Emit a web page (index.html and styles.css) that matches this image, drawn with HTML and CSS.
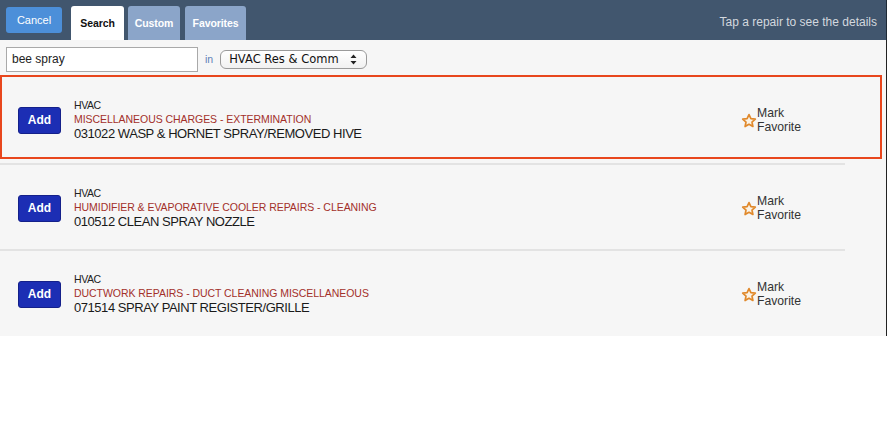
FILE: index.html
```html
<!DOCTYPE html>
<html>
<head>
<meta charset="utf-8">
<link rel="stylesheet" href="styles.css">
</head>
<body>
<div class="app">
  <div class="topbar">
    <div class="tabs">
      <div class="cancel">Cancel</div>
      <div class="tab active">Search</div>
      <div class="tab">Custom</div>
      <div class="tab">Favorites</div>
    </div>
    <div class="hint">Tap a repair to see the details</div>
  </div>
  <div class="content">
    <div class="searchrow">
      <div class="input">bee spray</div>
      <span class="in">in</span>
      <div class="select">
        <span>HVAC Res &amp; Comm</span>
        <svg class="arrows" width="7" height="11" viewBox="0 0 7 11"><path d="M3.5 0.5 L6.5 4 L0.5 4 Z M3.5 10.5 L6.5 7 L0.5 7 Z" fill="#222"/></svg>
      </div>
    </div>
    <div class="list">
      <div class="row selected">
        <div class="add">Add</div>
        <div class="info">
          <div class="trade">HVAC</div>
          <div class="cat">MISCELLANEOUS CHARGES - EXTERMINATION</div>
          <div class="name">031022 WASP &amp; HORNET SPRAY/REMOVED HIVE</div>
        </div>
        <div class="fav">
          <svg class="star" width="16" height="16" viewBox="0 0 16 16"><path d="M8 1.6 L9.9 5.6 L14.3 6.1 L11 9.1 L11.9 13.5 L8 11.3 L4.1 13.5 L5 9.1 L1.7 6.1 L6.1 5.6 Z" fill="#fbf3e6" stroke="#e0892c" stroke-width="1.7" stroke-linejoin="round"/></svg>
          <div class="favtext">Mark<br>Favorite</div>
        </div>
      </div>
      <div class="row">
        <div class="add">Add</div>
        <div class="info">
          <div class="trade">HVAC</div>
          <div class="cat">HUMIDIFIER &amp; EVAPORATIVE COOLER REPAIRS - CLEANING</div>
          <div class="name">010512 CLEAN SPRAY NOZZLE</div>
        </div>
        <div class="fav">
          <svg class="star" width="16" height="16" viewBox="0 0 16 16"><path d="M8 1.6 L9.9 5.6 L14.3 6.1 L11 9.1 L11.9 13.5 L8 11.3 L4.1 13.5 L5 9.1 L1.7 6.1 L6.1 5.6 Z" fill="#fbf3e6" stroke="#e0892c" stroke-width="1.7" stroke-linejoin="round"/></svg>
          <div class="favtext">Mark<br>Favorite</div>
        </div>
      </div>
      <div class="row">
        <div class="add">Add</div>
        <div class="info">
          <div class="trade">HVAC</div>
          <div class="cat">DUCTWORK REPAIRS - DUCT CLEANING MISCELLANEOUS</div>
          <div class="name">071514 SPRAY PAINT REGISTER/GRILLE</div>
        </div>
        <div class="fav">
          <svg class="star" width="16" height="16" viewBox="0 0 16 16"><path d="M8 1.6 L9.9 5.6 L14.3 6.1 L11 9.1 L11.9 13.5 L8 11.3 L4.1 13.5 L5 9.1 L1.7 6.1 L6.1 5.6 Z" fill="#fbf3e6" stroke="#e0892c" stroke-width="1.7" stroke-linejoin="round"/></svg>
          <div class="favtext">Mark<br>Favorite</div>
        </div>
      </div>
    </div>
  </div>
</div>
</body>
</html>
```
FILE: styles.css
```css
* { box-sizing: border-box; }
html, body { margin: 0; padding: 0; background: #ffffff; }
body { font-family: "Liberation Sans", Arial, sans-serif; color: #222; }

.app { width: 887px; }

.topbar {
  height: 40px;
  background: #41566e;
  display: flex;
  justify-content: space-between;
  align-items: flex-start;
  border-right: 1px solid #1e2a36;
}
.tabs { display: flex; align-items: flex-start; padding-left: 6px; padding-top: 6px; height: 40px; }
.cancel {
  margin-top: 1px;
  width: 56px; height: 26px;
  background: #4c8fd9;
  border-radius: 3px;
  color: #fff;
  font-size: 11px;
  display: flex; align-items: center; justify-content: center;
  margin-right: 9px;
}
.tab {
  height: 34px;
  padding: 0 6px;
  background: #8ba5c9;
  color: #fff;
  font-size: 10.5px;
  font-weight: bold;
  letter-spacing: -0.1px;
  border-radius: 3px 3px 0 0;
  display: flex; align-items: center; justify-content: center;
  margin-right: 4px;
  min-width: 52px;
}
.tab.active { background: #ffffff; color: #111; width: 53px; }
.tab:nth-child(3) { width: 52px; }
.tab:nth-child(4) { width: 61px; margin-left: 1px; }
.hint {
  color: #d3d8df;
  font-size: 12px;
  padding-top: 15px;
  padding-right: 9px;
}

.content {
  background: #f6f6f6;
  height: 296px;
  border-right: 1px solid #222;
}
.searchrow {
  display: flex;
  align-items: center;
  height: 35px;
  padding-left: 6px;
  padding-top: 3px;
}
.input {
  width: 192px; height: 25px;
  background: #fff;
  border: 1px solid #a9a9a9;
  font-size: 12px;
  color: #222;
  padding-left: 5px;
  display: flex; align-items: center;
}
.in { color: #5d7fb6; font-size: 10.5px; margin-left: 7px; margin-right: 7px; }
.select {
  width: 147px; height: 19px;
  border: 1px solid #9a9a9a;
  border-radius: 6px;
  background: linear-gradient(#ffffff, #f1f1f1);
  font-family: "DejaVu Sans", sans-serif;
  font-size: 11.5px;
  color: #111;
  display: flex; align-items: center; justify-content: space-between;
  padding: 0 9px 0 8px;
}

.list { display: flex; flex-direction: column; }
.row {
  display: flex;
  align-items: center;
  height: 86px;
  border-top: 2px solid #e3e3e3;
  margin-right: 41px;
  padding-left: 18px;
  padding-top: 2px;
}
.row.selected {
  height: 84px;
  border: 2px solid #e8461d;
  margin-right: 4px;
  margin-bottom: 4px;
  padding-left: 16px;
  padding-top: 6px;
}
.add {
  width: 43px; height: 27px;
  background: #1c2eb4;
  border: 1px solid #14208a;
  border-radius: 3px;
  color: #fff;
  font-weight: bold;
  font-size: 12px;
  display: flex; align-items: center; justify-content: center;
  flex: none;
}
.info { width: 667px; margin-left: 13px; flex: none; }
.trade { font-size: 10.5px; line-height: 13px; letter-spacing: -0.4px; color: #222; }
.cat { font-size: 10.5px; line-height: 14px; color: #a3302a; letter-spacing: -0.05px; }
.name { font-size: 13px; line-height: 16px; color: #1a1a1a; letter-spacing: -0.45px; }
.fav { display: flex; align-items: center; }
.star { display: block; margin-right: 0; margin-top: 1px; }
.favtext { font-size: 12.2px; line-height: 14px; color: #333; }
```
